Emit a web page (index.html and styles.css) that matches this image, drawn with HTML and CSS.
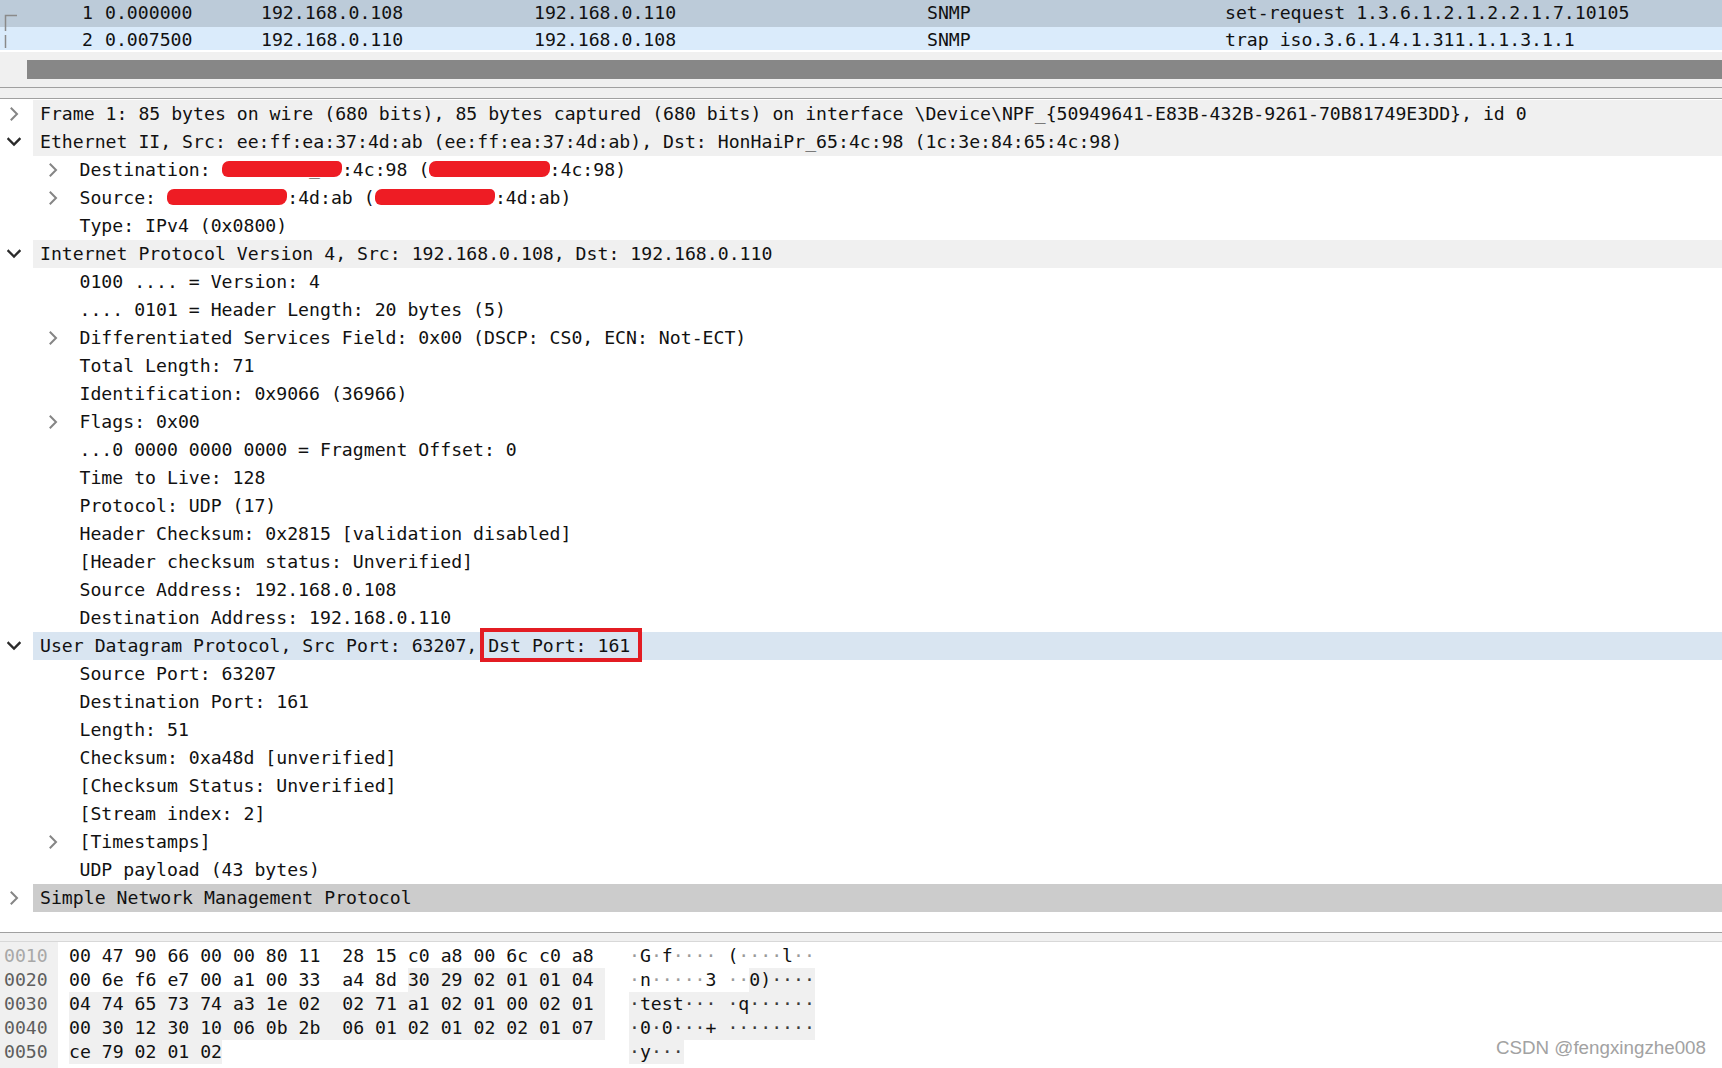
FILE: index.html
```html
<!DOCTYPE html>
<html>
<head>
    <title>Wireshark - SNMP capture</title>
    <link rel="stylesheet" href="styles.css">
</head>
<body>
    <!-- packet list -->
    <div class="packet-list">
        <div class="pkt-rows">
            <div class="pkt pkt-selected">
                <span class="c-rel">
                    <svg width="20" height="27" viewBox="0 0 20 27"><path d="M5.5 27 V15.5 H17" fill="none" stroke="#8a8a8a" stroke-width="1.5"/></svg>
                </span>
                <span class="c-no">1</span>
                <span class="c-time">0.000000</span>
                <span class="c-src">192.168.0.108</span>
                <span class="c-dst">192.168.0.110</span>
                <span class="c-proto">SNMP</span>
                <span class="c-info">set-request 1.3.6.1.2.1.2.2.1.7.10105</span>
            </div>
            <div class="pkt pkt-related">
                <span class="c-rel">
                    <svg width="20" height="23" viewBox="0 0 20 23"><path d="M5.5 0 V4 M5.5 8 V21" fill="none" stroke="#8a8a8a" stroke-width="1.5"/></svg>
                </span>
                <span class="c-no">2</span>
                <span class="c-time">0.007500</span>
                <span class="c-src">192.168.0.110</span>
                <span class="c-dst">192.168.0.108</span>
                <span class="c-proto">SNMP</span>
                <span class="c-info">trap iso.3.6.1.4.1.311.1.1.3.1.1</span>
            </div>
        </div>
        <div class="hscroll"><div class="hscroll-thumb"></div></div>
    </div>

    <div class="splitter"></div>

    <!-- packet details -->
    <div class="tree">
        <div class="row l0 top"><span class="tog"><svg class="closed" width="10" height="14" viewBox="0 0 10 14"><path d="M2.5 1.5 L8 7 L2.5 12.5"/></svg></span><span class="label">Frame 1: 85 bytes on wire (680 bits), 85 bytes captured (680 bits) on interface \Device\NPF_{50949641-E83B-432B-9261-70B81749E3DD}, id 0</span></div>
        <div class="row l0 top"><span class="tog"><svg class="open" width="14" height="10" viewBox="0 0 14 10"><path d="M1.5 2 L7 7.5 L12.5 2"/></svg></span><span class="label">Ethernet II, Src: ee:ff:ea:37:4d:ab (ee:ff:ea:37:4d:ab), Dst: HonHaiPr_65:4c:98 (1c:3e:84:65:4c:98)</span></div>
        <div class="row l1"><span class="tog"><svg class="closed" width="10" height="14" viewBox="0 0 10 14"><path d="M2.5 1.5 L8 7 L2.5 12.5"/></svg></span><span class="label">Destination: <span class="redact">HonHaiPr<span class="peek">_</span>65</span>:4c:98 (<span class="redact">1c:3e:84:65</span>:4c:98)</span></div>
        <div class="row l1"><span class="tog"><svg class="closed" width="10" height="14" viewBox="0 0 10 14"><path d="M2.5 1.5 L8 7 L2.5 12.5"/></svg></span><span class="label">Source: <span class="redact">ee:ff:ea:37</span>:4d:ab (<span class="redact">ee:ff:ea:37</span>:4d:ab)</span></div>
        <div class="row l1"><span class="tog"></span><span class="label">Type: IPv4 (0x0800)</span></div>
        <div class="row l0 top"><span class="tog"><svg class="open" width="14" height="10" viewBox="0 0 14 10"><path d="M1.5 2 L7 7.5 L12.5 2"/></svg></span><span class="label">Internet Protocol Version 4, Src: 192.168.0.108, Dst: 192.168.0.110</span></div>
        <div class="row l1"><span class="tog"></span><span class="label">0100 .... = Version: 4</span></div>
        <div class="row l1"><span class="tog"></span><span class="label">.... 0101 = Header Length: 20 bytes (5)</span></div>
        <div class="row l1"><span class="tog"><svg class="closed" width="10" height="14" viewBox="0 0 10 14"><path d="M2.5 1.5 L8 7 L2.5 12.5"/></svg></span><span class="label">Differentiated Services Field: 0x00 (DSCP: CS0, ECN: Not-ECT)</span></div>
        <div class="row l1"><span class="tog"></span><span class="label">Total Length: 71</span></div>
        <div class="row l1"><span class="tog"></span><span class="label">Identification: 0x9066 (36966)</span></div>
        <div class="row l1"><span class="tog"><svg class="closed" width="10" height="14" viewBox="0 0 10 14"><path d="M2.5 1.5 L8 7 L2.5 12.5"/></svg></span><span class="label">Flags: 0x00</span></div>
        <div class="row l1"><span class="tog"></span><span class="label">...0 0000 0000 0000 = Fragment Offset: 0</span></div>
        <div class="row l1"><span class="tog"></span><span class="label">Time to Live: 128</span></div>
        <div class="row l1"><span class="tog"></span><span class="label">Protocol: UDP (17)</span></div>
        <div class="row l1"><span class="tog"></span><span class="label">Header Checksum: 0x2815 [validation disabled]</span></div>
        <div class="row l1"><span class="tog"></span><span class="label">[Header checksum status: Unverified]</span></div>
        <div class="row l1"><span class="tog"></span><span class="label">Source Address: 192.168.0.108</span></div>
        <div class="row l1"><span class="tog"></span><span class="label">Destination Address: 192.168.0.110</span></div>
        <div class="row l0 hover"><span class="tog"><svg class="open" width="14" height="10" viewBox="0 0 14 10"><path d="M1.5 2 L7 7.5 L12.5 2"/></svg></span><span class="label">User Datagram Protocol, Src Port: 63207, <span class="boxed">Dst Port: 161</span></span></div>
        <div class="row l1"><span class="tog"></span><span class="label">Source Port: 63207</span></div>
        <div class="row l1"><span class="tog"></span><span class="label">Destination Port: 161</span></div>
        <div class="row l1"><span class="tog"></span><span class="label">Length: 51</span></div>
        <div class="row l1"><span class="tog"></span><span class="label">Checksum: 0xa48d [unverified]</span></div>
        <div class="row l1"><span class="tog"></span><span class="label">[Checksum Status: Unverified]</span></div>
        <div class="row l1"><span class="tog"></span><span class="label">[Stream index: 2]</span></div>
        <div class="row l1"><span class="tog"><svg class="closed" width="10" height="14" viewBox="0 0 10 14"><path d="M2.5 1.5 L8 7 L2.5 12.5"/></svg></span><span class="label">[Timestamps]</span></div>
        <div class="row l1"><span class="tog"></span><span class="label">UDP payload (43 bytes)</span></div>
        <div class="row l0 selected"><span class="tog"><svg class="closed" width="10" height="14" viewBox="0 0 10 14"><path d="M2.5 1.5 L8 7 L2.5 12.5"/></svg></span><span class="label">Simple Network Management Protocol</span></div>
    </div>

    <div class="splitter splitter-low"></div>

    <!-- packet bytes -->
    <div class="bytes">
        <div class="offsets">
            <div class="ln ghost">0010</div>
            <div class="ln">0020</div>
            <div class="ln">0030</div>
            <div class="ln">0040</div>
            <div class="ln">0050</div>
        </div>
        <div class="hex">
            <div class="ln">00 47 90 66 00 00 80 11  28 15 c0 a8 00 6c c0 a8</div>
            <div class="ln">00 6e f6 e7 00 a1 00 33  a4 8d <span class="sel">30 29 02 01 01 04 </span></div>
            <div class="ln"><span class="sel">04 74 65 73 74 a3 1e 02  02 71 a1 02 01 00 02 01 </span></div>
            <div class="ln"><span class="sel">00 30 12 30 10 06 0b 2b  06 01 02 01 02 02 01 07 </span></div>
            <div class="ln"><span class="sel">ce 79 02 01 02</span></div>
        </div>
        <div class="ascii">
            <div class="ln"><i>·</i>G<i>·</i>f<i>····</i> (<i>····</i>l<i>··</i></div>
            <div class="ln"><i>·</i>n<i>·····</i>3 <i>··</i><span class="sel">0)<i>····</i></span></div>
            <div class="ln"><span class="sel"><i>·</i>test<i>···</i> <i>·</i>q<i>······</i></span></div>
            <div class="ln"><span class="sel"><i>·</i>0<i>·</i>0<i>···</i>+ <i>········</i></span></div>
            <div class="ln"><span class="sel"><i>·</i>y<i>···</i></span></div>
        </div>
    </div>

    <div class="watermark">CSDN @fengxingzhe008</div>
</body>
</html>
```

FILE: styles.css
```css
html, body {
    margin: 0;
    padding: 0;
    background-color: #ffffff;
}

body {
    width: 1722px;
    height: 1068px;
    overflow: hidden;
    position: relative;
    font-family: "DejaVu Sans Mono", "Liberation Mono", monospace;
    font-size: 18.16px;
    color: #111111;
}

/* packet list */

.pkt-rows {
    height: 52px;
    background-color: #ffffff;
}

.pkt {
    display: flex;
    white-space: pre;
    overflow: hidden;
}

.pkt-selected {
    height: 27px;
    line-height: 25px;
    background-color: #bccbd9;
}

.pkt-related {
    height: 23px;
    line-height: 25px;
    background-color: #daebfb;
}

.c-rel {
    width: 20px;
    flex: none;
    display: flex;
}

.c-no {
    width: 73px;
    flex: none;
    text-align: right;
}

.c-time {
    width: 156px;
    margin-left: 12px;
    flex: none;
}

.c-src {
    width: 273px;
    flex: none;
}

.c-dst {
    width: 393px;
    flex: none;
}

.c-proto {
    width: 298px;
    flex: none;
}

.c-info {
    flex: 1;
}

.hscroll {
    height: 35px;
    box-sizing: border-box;
    padding: 8px 0 0 27px;
    background-color: #f0f0f0;
}

.hscroll-thumb {
    height: 19px;
    background-color: #878787;
}

.splitter {
    height: 10px;
    background-color: #f0f0f0;
    border-top: 1px solid #a0a0a0;
    border-bottom: 1px solid #a0a0a0;
}

.splitter-low {
    height: 8px;
    border-bottom-color: #d8d8d8;
}

/* packet details tree */

.tree {
    height: 833px;
    padding-top: 1px;
    box-sizing: border-box;
    overflow: hidden;
}

.row {
    display: flex;
    height: 28px;
    line-height: 28px;
    white-space: pre;
}

.row.l1 {
    padding-left: 39.5px;
}

.tog {
    width: 27px;
    flex: none;
    display: flex;
    align-items: center;
    justify-content: center;
}

.tog svg path {
    fill: none;
    stroke-linecap: square;
}

.tog .closed path {
    stroke: #858585;
    stroke-width: 2;
}

.tog .open path {
    stroke: #2b2b2b;
    stroke-width: 2.3;
}

.label {
    flex: 1;
    margin-left: 6px;
    padding-left: 7px;
}

.top .label {
    background-color: #f0f0f0;
}

.hover .label {
    background-color: #d9e5f1;
}

.selected .label {
    background-color: #cccccc;
}

.redact {
    display: inline-block;
    height: 16px;
    line-height: 16px;
    vertical-align: 1px;
    color: transparent;
    background-color: #ee1c24;
    border-radius: 7px 5px 8px 6px;
}

.redact .peek {
    color: #222222;
}

.boxed {
    position: relative;
}

.boxed::after {
    content: "";
    position: absolute;
    left: -8px;
    right: -12px;
    top: -7px;
    bottom: -6px;
    border: 4px solid #e31c23;
}

/* packet bytes */

.bytes {
    display: flex;
    height: 126px;
}

.ln {
    height: 24px;
    line-height: 24px;
    white-space: pre;
}

.offsets {
    width: 58px;
    box-sizing: border-box;
    padding: 2px 0 0 4px;
    background-color: #f0f0f0;
    color: #5e5e5e;
}

.offsets .ghost {
    color: #a8a8a8;
}

.hex {
    width: 560px;
    padding: 2px 0 0 11px;
}

.ascii {
    padding-top: 2px;
}

.sel {
    display: inline-block;
    background-color: #f0f0f0;
}

.ascii i {
    font-style: normal;
    color: #9a9a9a;
}

.ascii .sel i {
    color: #3a3a3a;
}

.watermark {
    position: absolute;
    right: 16px;
    bottom: 9px;
    font-family: "Liberation Sans", Arial, sans-serif;
    font-size: 18.8px;
    color: #a2a2a2;
    text-shadow: 0 0 1px #ffffff;
}
```
